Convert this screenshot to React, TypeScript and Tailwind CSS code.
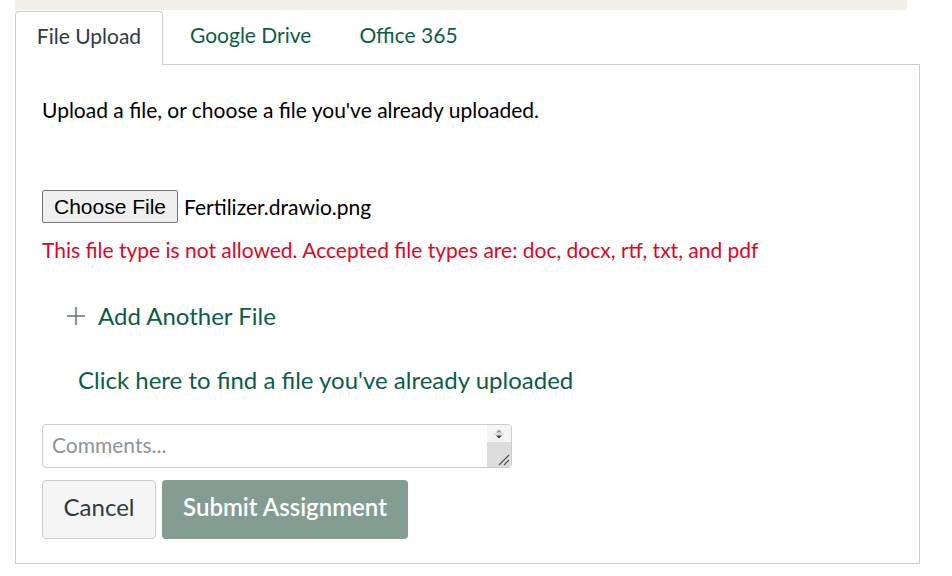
import React from "react";

const LATO = "font-['Lato','Liberation_Sans',sans-serif]";

function Tabs() {
  return (
    <div className="mt-[1px] flex h-[54px] items-end">
      <div className="flex h-[54px] w-[148px] items-center justify-center rounded-t-[4px] border border-b-0 border-[#c7cdd1] bg-white pb-[6px] text-[21px] text-[#2d3b45]">
        File Upload
      </div>
      <div className="flex h-[54px] items-center pb-[6px] pl-[27px] text-[21px] text-[#0b5d48]">Google Drive</div>
      <div className="flex h-[54px] items-center pb-[6px] pl-[48px] text-[21px] text-[#0b5d48]">Office 365</div>
    </div>
  );
}

function CommentBox() {
  return (
    <div className="flex h-[44px] w-[470px] overflow-hidden rounded-[4px] border border-[#c7cdd1] bg-white">
      <div className="flex-1 pl-[9px] pt-[8px] text-[21px] leading-[24px] text-[#8b9499]">Comments...</div>
      <div className="flex w-[24px] flex-col">
        <div className="flex h-[17px] flex-col items-center justify-center bg-[#f4f4f4]">
          <svg width="10" height="12" viewBox="0 0 10 12">
            <path d="M2 4.5 L5 1.5 L8 4.5 Z" fill="#9a9a9a" />
            <line x1="0" y1="6" x2="10" y2="6" stroke="#c8c8c8" strokeWidth="1" />
            <path d="M2 7.5 L5 10.5 L8 7.5 Z" fill="#3a3a3a" />
          </svg>
        </div>
        <div className="relative flex-1 bg-[#dcdcdc]">
          <svg className="absolute bottom-[1px] right-[1px]" width="14" height="14" viewBox="0 0 14 14">
            <line x1="3" y1="13" x2="13" y2="3" stroke="#555" strokeWidth="1.2" />
            <line x1="8" y1="13" x2="13" y2="8" stroke="#555" strokeWidth="1.2" />
          </svg>
        </div>
      </div>
    </div>
  );
}

export default function App() {
  return (
    <div className={`${LATO} h-[576px] w-[952px] bg-white px-[15px]`}>
      <div className="h-[10px] w-[892px] bg-[#f3f0e8]" />
      <div className="w-[905px]">
        <Tabs />
        <div className="mt-[-1px] h-[500px] border border-[#c7cdd1] pl-[26px] pt-[32px]">
          <p className="text-[21px] leading-[26px] text-[#000]">
            Upload a file, or choose a file you've already uploaded.
          </p>
          <div className="mt-[67px] flex items-center gap-[6px]">
            <button className="h-[33px] w-[136px] rounded-[2px] border border-[#767676] bg-[#efefef] font-['Liberation_Sans',Arial,sans-serif] text-[21px] text-black">
              Choose File
            </button>
            <span className="text-[21px] text-black">Fertilizer.drawio.png</span>
          </div>
          <p className="mt-[14px] text-[21px] leading-[26px] text-[#e0061f]">
            This file type is not allowed. Accepted file types are: doc, docx, rtf, txt, and pdf
          </p>
          <div className="ml-[24px] mt-[38px] flex items-center gap-[12px] text-[24px] leading-[30px] text-[#0b5d48]">
            <svg width="20" height="20" viewBox="0 0 20 20">
              <line x1="10" y1="1" x2="10" y2="19" stroke="#6c7a74" strokeWidth="1.6" />
              <line x1="1" y1="10" x2="19" y2="10" stroke="#6c7a74" strokeWidth="1.6" />
            </svg>
            <span>Add Another File</span>
          </div>
          <p className="ml-[36px] mt-[34px] text-[24px] leading-[30px] text-[#0b5d48]">
            Click here to find a file you've already uploaded
          </p>
          <div className="mt-[29px]">
            <CommentBox />
          </div>
          <div className="mt-[12px] flex gap-[6px]">
            <button className="h-[59px] w-[114px] rounded-[4px] border border-[#c7cdd1] bg-[#f5f5f5] pb-[5px] text-[24px] text-[#2d3b45]">
              Cancel
            </button>
            <button className="h-[59px] w-[246px] rounded-[4px] bg-[#839d93] pb-[5px] text-[24px] font-semibold text-white">
              Submit Assignment
            </button>
          </div>
        </div>
      </div>
    </div>
  );
}
